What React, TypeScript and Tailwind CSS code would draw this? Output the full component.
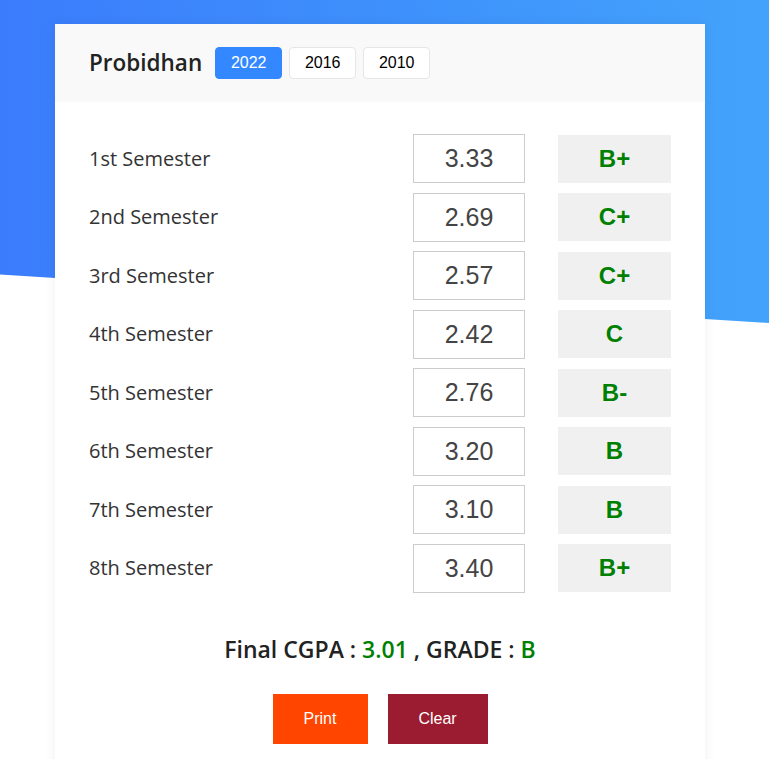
import { useState } from "react";

const semesters = [
  { name: "1st Semester", gpa: "3.33", grade: "B+" },
  { name: "2nd Semester", gpa: "2.69", grade: "C+" },
  { name: "3rd Semester", gpa: "2.57", grade: "C+" },
  { name: "4th Semester", gpa: "2.42", grade: "C" },
  { name: "5th Semester", gpa: "2.76", grade: "B-" },
  { name: "6th Semester", gpa: "3.20", grade: "B" },
  { name: "7th Semester", gpa: "3.10", grade: "B" },
  { name: "8th Semester", gpa: "3.40", grade: "B+" },
];

export default function App() {
  const [year, setYear] = useState("2022");

  return (
    <div className="relative min-h-[759px] overflow-hidden bg-white font-['Open_Sans',sans-serif]">
      {/* slanted gradient background */}
      <div className="absolute inset-x-0 top-0 h-[323px] bg-gradient-to-r from-[#3b7cfc] to-[#43a3fb] [clip-path:polygon(0_0,100%_0,100%_100%,0_85%)]"></div>

      <div className="relative ml-[55px] mt-[24px] w-[650px] bg-white shadow-[0_0_12px_rgba(0,0,0,0.06)] pb-[40px]">
        <div className="flex h-[78px] items-center gap-[13px] bg-[#f9f9f9] px-[34px]">
          <h1 className="text-[22.5px] font-semibold text-[#222]">Probidhan</h1>
          <div className="flex gap-[7px]">
            {["2022", "2016", "2010"].map((y) => (
              <button
                key={y}
                onClick={() => setYear(y)}
                className={
                  year === y
                    ? "h-[32px] w-[67px] rounded-[4px] border border-[#3388ff] bg-[#3388ff] font-['Liberation_Sans',sans-serif] text-[16px] text-white"
                    : "h-[32px] w-[67px] rounded-[4px] border border-[#e6e6e6] bg-white font-['Liberation_Sans',sans-serif] text-[16px] text-black"
                }
              >
                {y}
              </button>
            ))}
          </div>
        </div>

        <div className="flex flex-col gap-[9.5px] px-[34px] pt-[32px]">
          {semesters.map((s) => (
            <div key={s.name} className="flex items-center">
              <label className="flex-1 text-[20px] text-[#333]">{s.name}</label>
              <input
                defaultValue={s.gpa}
                className="h-[49px] w-[112px] border border-[#ccc] bg-white text-center font-['Liberation_Sans',sans-serif] text-[25px] text-[#444] outline-none"
              />
              <div className="ml-[33px] flex h-[48px] w-[113px] items-center justify-center bg-[#f0f0f0] font-['Liberation_Sans',sans-serif] text-[24px] font-bold text-[#008000]">
                {s.grade}
              </div>
            </div>
          ))}
        </div>

        <p className="mt-[39px] text-center text-[23px] font-semibold text-[#222]">
          Final CGPA : <span className="text-[#008000]">3.01</span> , GRADE :{" "}
          <span className="text-[#008000]">B</span>
        </p>

        <div className="mt-[28px] flex justify-center gap-[20px] font-['Liberation_Sans',sans-serif] text-[16px] text-white">
          <button className="h-[50px] w-[95px] bg-[#ff4500]">Print</button>
          <button className="h-[50px] w-[100px] bg-[#9b1b30]">Clear</button>
        </div>
      </div>
    </div>
  );
}
